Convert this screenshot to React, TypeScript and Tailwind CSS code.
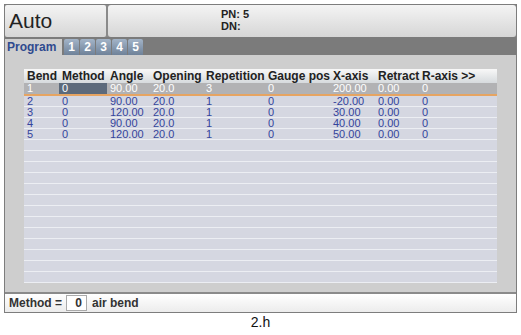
import React from "react";

const cols = [
  { label: "Bend", w: "w-[35px]" },
  { label: "Method", w: "w-[48px]" },
  { label: "Angle", w: "w-[43px]" },
  { label: "Opening", w: "w-[53px]" },
  { label: "Repetition", w: "w-[62px]" },
  { label: "Gauge pos", w: "w-[65px]" },
  { label: "X-axis", w: "w-[45px]" },
  { label: "Retract", w: "w-[44px]" },
  { label: "R-axis >>", w: "w-[78px]" },
];

const rows = [
  ["1", "0", "90.00", "20.0", "3", "0", "200.00", "0.00", "0"],
  ["2", "0", "90.00", "20.0", "1", "0", "-20.00", "0.00", "0"],
  ["3", "0", "120.00", "20.0", "1", "0", "30.00", "0.00", "0"],
  ["4", "0", "90.00", "20.0", "1", "0", "40.00", "0.00", "0"],
  ["5", "0", "120.00", "20.0", "1", "0", "50.00", "0.00", "0"],
];

const emptyRows = Array.from({ length: 13 });

export default function App() {
  return (
    <div
      className="w-[521px] h-[335px] bg-white pt-[4px] pl-[4px]"
      style={{ fontFamily: '"Liberation Sans", Arial, sans-serif' }}
    >
      <div className="w-[513px] border border-[#7d7d7d] bg-[#cecece]">
        {/* header */}
        <div className="flex h-[32px] gap-[2px] bg-[#8a8a8a]">
          <div className="w-[101px] rounded-[2px] bg-gradient-to-b from-[#f4f4f4] to-[#d6d6d6] pl-[4px] pt-[5px] text-[21px] leading-[22px] text-[#222]">
            Auto
          </div>
          <div className="flex-1 rounded-[3px] bg-gradient-to-b from-[#f4f4f4] to-[#d6d6d6] pl-[113px] pt-[3px] text-[11px] font-bold leading-[12px] text-[#222]">
            <div>PN: 5</div>
            <div>DN:</div>
          </div>
        </div>

        {/* tabs */}
        <div className="flex h-[18px] bg-[#7b7b7b] pt-[2px]">
          <div className="w-[57px] bg-[#cecece] pl-[2px] text-[12px] font-bold leading-[16px] text-[#2f4a8f]">
            Program
          </div>
          <div className="ml-[2px] flex gap-[1px]">
            {["1", "2", "3", "4", "5"].map((n) => (
              <div
                key={n}
                className="w-[15px] rounded-t-[2px] bg-gradient-to-b from-[#a3b4c8] to-[#6f8299] text-center text-[12px] font-bold leading-[16px] text-white"
              >
                {n}
              </div>
            ))}
          </div>
        </div>

        {/* table area */}
        <div className="h-[237px] pt-[14px] pl-[19px]">
          <div className="w-[473px] bg-[#d5d7e1]">
            <div className="flex h-[14px] bg-gradient-to-b from-[#f8f8f8] to-[#d6dadd] text-[12px] font-bold leading-[14px] text-[#222]">
              {cols.map((c) => (
                <div key={c.label} className={`${c.w} pl-[3px] whitespace-nowrap`}>
                  {c.label}
                </div>
              ))}
            </div>
            {rows.map((r, i) => (
              <div
                key={i}
                className={
                  i === 0
                    ? "flex h-[13px] border-b-2 border-[#e6a462] bg-[#b2b2b4] text-[11px] leading-[11px] text-white"
                    : "flex h-[11px] border-b border-[#eceef3] text-[11px] leading-[10px] text-[#34449c]"
                }
              >
                {r.map((v, j) => (
                  <div
                    key={j}
                    className={`${cols[j].w} pl-[3px] whitespace-nowrap ${
                      i === 0 && j === 1 ? "bg-[#5d6a7b]" : ""
                    }`}
                  >
                    {v}
                  </div>
                ))}
              </div>
            ))}
            {emptyRows.map((_, i) => (
              <div key={i} className="h-[11px] border-b border-[#eceef3]" />
            ))}
          </div>
        </div>

        {/* status bar */}
        <div className="flex h-[20px] items-center border-t-2 border-[#8a8a8a] bg-gradient-to-b from-[#ffffff] to-[#ececec] pl-[4px] text-[12px] font-bold text-[#333]">
          <span>Method =</span>
          <span className="ml-[4px] w-[21px] border border-[#aaa] bg-white pr-[4px] text-right leading-[14px]">
            0
          </span>
          <span className="ml-[5px]">air bend</span>
        </div>
      </div>
      <div className="w-[513px] pt-[1px] text-center text-[14px] leading-[16px] text-[#111]">2.h</div>
    </div>
  );
}
